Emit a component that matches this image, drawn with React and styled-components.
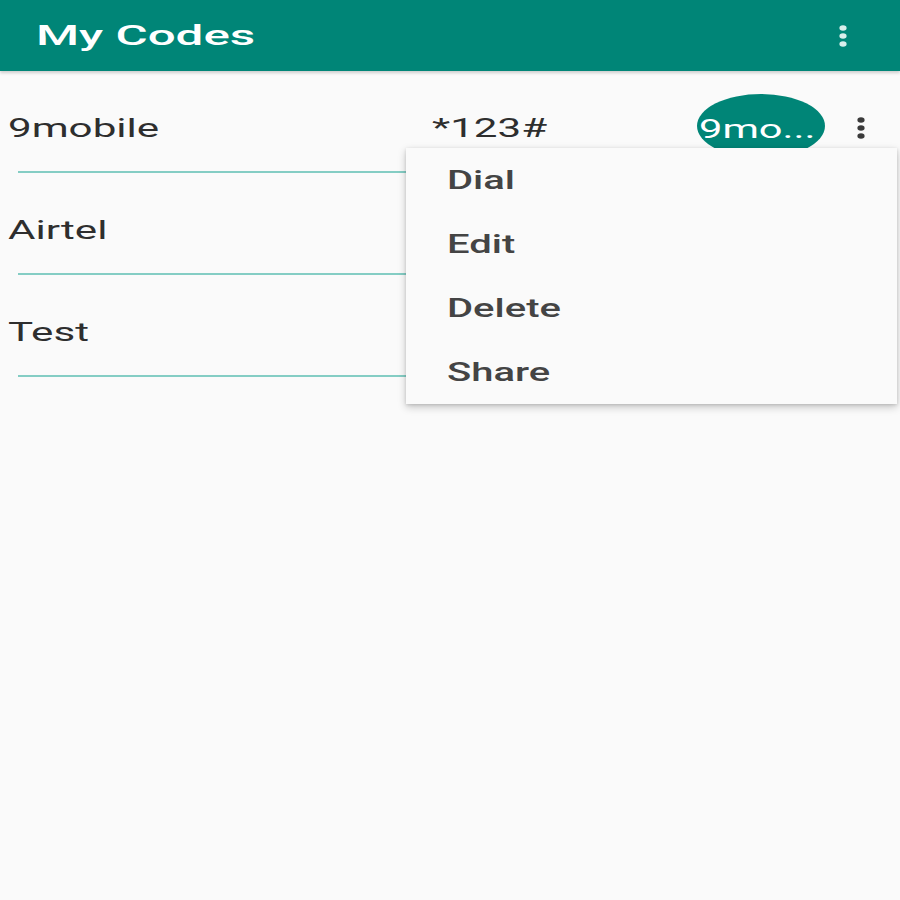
import React from "react";
import styled, { createGlobalStyle } from "styled-components";

const GlobalStyle = createGlobalStyle`
  body {
    margin: 0;
    background-color: #fafafa;
    font-family: Roboto, "Liberation Sans", sans-serif;
  }
`;

const Page = styled.div`
  position: relative;
  width: 900px;
  height: 900px;
  background-color: #fafafa;
  overflow: hidden;
`;

const AppBar = styled.header`
  height: 71px;
  background-color: #008577;
  display: flex;
  align-items: center;
  justify-content: space-between;
  padding: 0 51px 0 36px;
  box-shadow: 0 2px 3px rgba(0, 0, 0, 0.18);
  position: relative;
  z-index: 1;
`;

// the screenshot is stretched sideways, so text is widened by scaleX
const Stretch = styled.span`
  display: inline-block;
  transform: scaleX(${p => p.scale || 1.62});
  transform-origin: left center;
  white-space: nowrap;
`;

const Title = styled.h1`
  margin: 0;
  color: #fff;
  font-size: 28px;
  font-weight: 500;
  line-height: 1;
`;

const List = styled.div`
  display: flex;
  flex-direction: column;
`;

const Item = styled.div`
  display: flex;
  flex-direction: column;
`;

const Content = styled.div`
  height: 86px;
  padding-top: 14px;
  display: flex;
  align-items: center;
`;

const Name = styled.div`
  width: 424px;
  padding-left: 8px;
  font-size: 26px;
  color: #2e2e2e;
`;

const Code = styled.div`
  width: 265px;
  font-size: 26px;
  color: #2e2e2e;
`;

const Badge = styled.div`
  width: 128px;
  height: 64px;
  margin-top: -4px;
  border-radius: 50%;
  background-color: #008577;
  color: #fff;
  font-size: 26px;
  display: flex;
  align-items: center;
  padding: 6px 0 0 2px;
  box-sizing: border-box;
`;

const MoreButton = styled.div`
  margin-left: 30px;
  display: flex;
  align-items: center;
`;

const Divider = styled.div`
  height: 2px;
  margin: 0 18px;
  background-color: #84cdc4;
`;

const Menu = styled.ul`
  position: absolute;
  top: 148px;
  left: 406px;
  right: 3px;
  margin: 0;
  padding: 0;
  list-style: none;
  background-color: #fafafa;
  box-shadow: 0 3px 8px rgba(0, 0, 0, 0.22), 0 1px 3px rgba(0, 0, 0, 0.12);
  z-index: 2;
`;

const MenuItem = styled.li`
  height: 64px;
  display: flex;
  align-items: center;
  padding-left: 41px;
  font-size: 25px;
  font-weight: 500;
  color: #444;
`;

const Dots = ({ color }) => (
  <svg width="12" height="24" viewBox="0 0 12 24">
    <ellipse cx="6" cy="4" rx="3.6" ry="2.8" fill={color} />
    <ellipse cx="6" cy="12" rx="3.6" ry="2.8" fill={color} />
    <ellipse cx="6" cy="20" rx="3.6" ry="2.8" fill={color} />
  </svg>
);

const codes = [
  { name: "9mobile", code: "*123#", badge: "9mo..." },
  { name: "Airtel" },
  { name: "Test" }
];

const menuItems = ["Dial", "Edit", "Delete", "Share"];

const App = () => {
  return (
    <Page>
      <GlobalStyle />
      <AppBar>
        <Title>
          <Stretch scale={1.76}>My Codes</Stretch>
        </Title>
        <Dots color="#d8efec" />
      </AppBar>
      <List>
        {codes.map(item => (
          <Item key={item.name}>
            <Content>
              <Name>
                <Stretch>{item.name}</Stretch>
              </Name>
              {item.code && (
                <>
                  <Code>
                    <Stretch>{item.code}</Stretch>
                  </Code>
                  <Badge>
                    <Stretch scale={1.6}>{item.badge}</Stretch>
                  </Badge>
                  <MoreButton>
                    <Dots color="#3a3a3a" />
                  </MoreButton>
                </>
              )}
            </Content>
            <Divider />
          </Item>
        ))}
      </List>
      <Menu>
        {menuItems.map(label => (
          <MenuItem key={label}>
            <Stretch scale={1.6}>{label}</Stretch>
          </MenuItem>
        ))}
      </Menu>
    </Page>
  );
};

export default App;
